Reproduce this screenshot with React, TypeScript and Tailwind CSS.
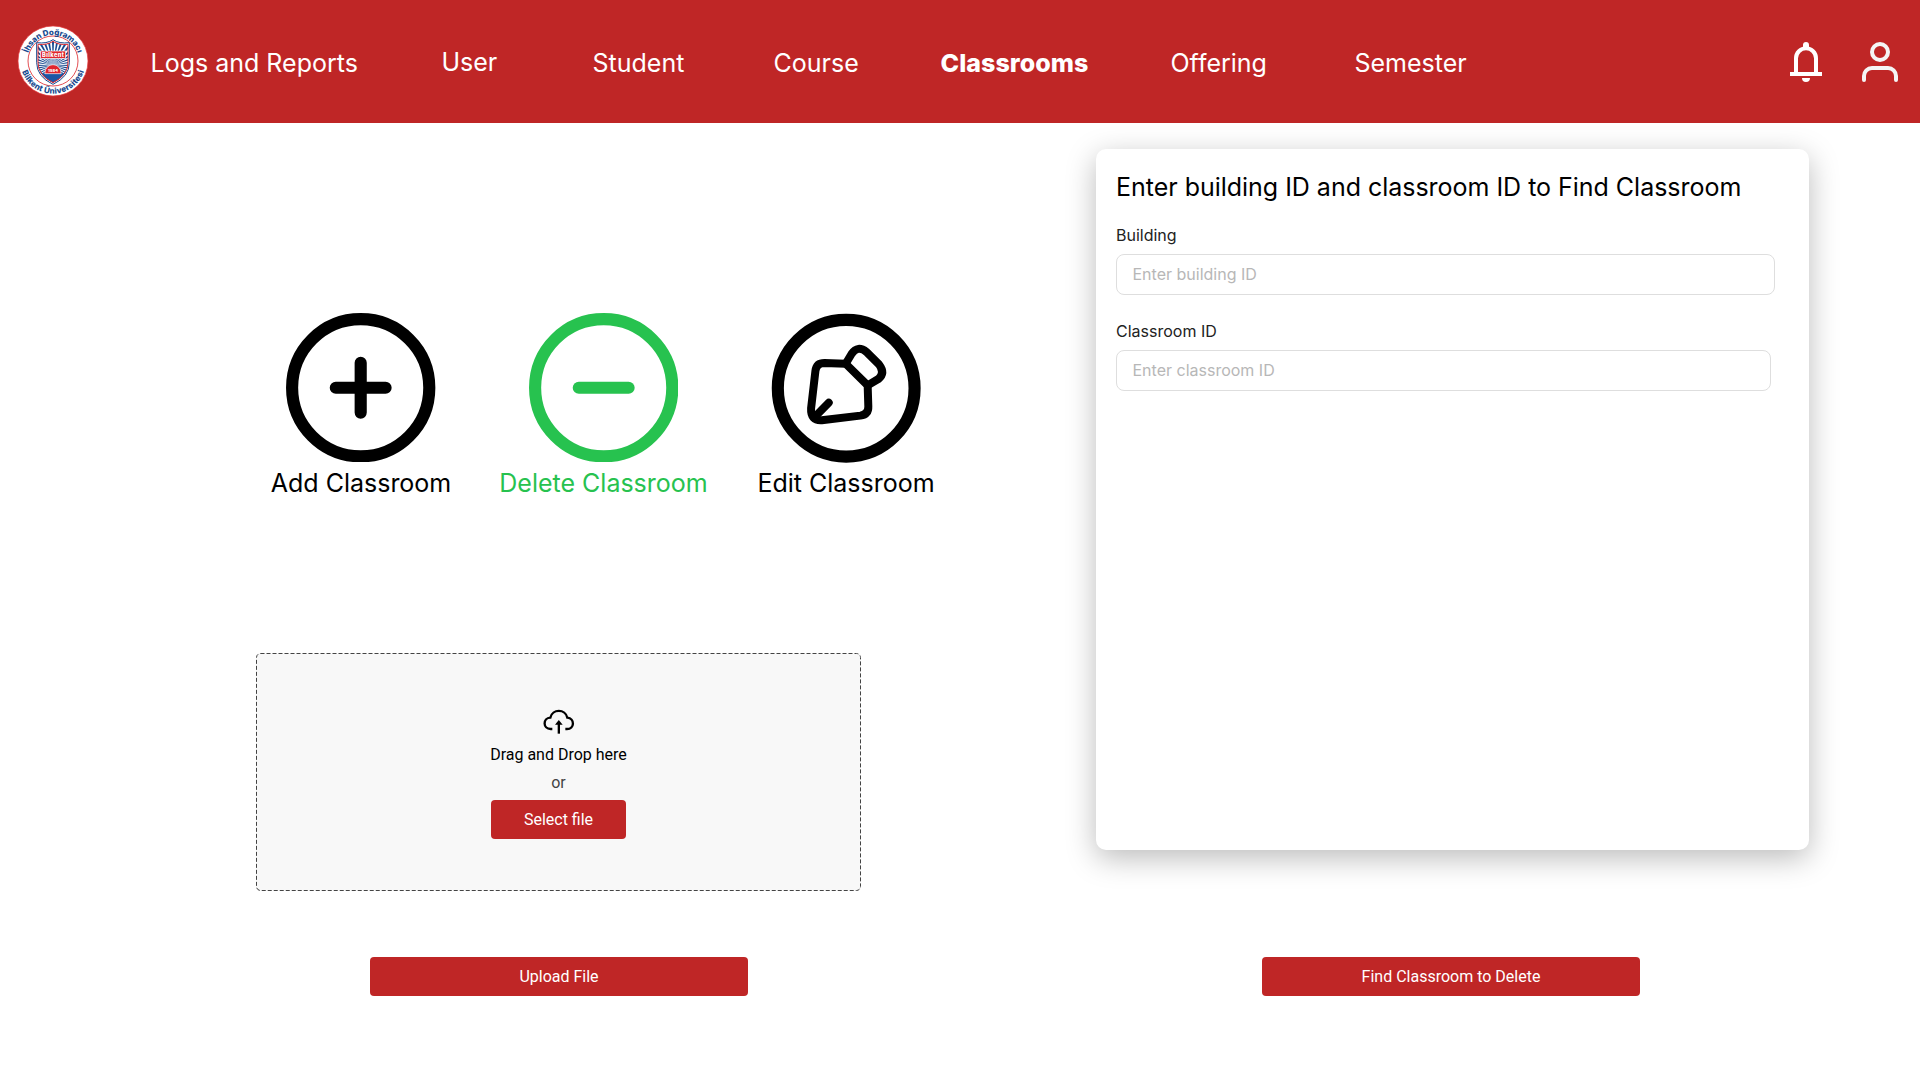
import type { ReactNode } from "react";

const navItems = [
  { label: "Logs and Reports", cls: "w-[291px]" },
  { label: "User", cls: "w-[151px] -mt-0.5" },
  { label: "Student", cls: "w-[181px]" },
  { label: "Course", cls: "w-[167px]" },
  { label: "Classrooms", cls: "w-[230px] font-extrabold tracking-[0.05px]" },
  { label: "Offering", cls: "w-[184px]" },
  { label: "Semester", cls: "" },
];

const CX = 158;
const CY = 168;

function wedge(i: number) {
  const a = (i * Math.PI) / 18;
  const w = Math.PI / 72;
  const p = (t: number) => `${CX + 110 * Math.cos(t)} ${CY + 110 * Math.sin(t)}`;
  return `M${CX} ${CY} L${p(a - w)} L${p(a + w)} Z`;
}

function Logo() {
  return (
    <svg viewBox="50 47 216 216" className="-mt-px h-[72px] w-[72px] shrink-0">
      <defs>
        <path id="arc-top" d="M80 155 A78 78 0 0 1 236 155" />
        <path id="arc-bottom" d="M60 155 A98 98 0 0 0 256 155" />
        <clipPath id="shield">
          <path d="M113 106 Q140 108 158 96 Q176 108 203 106 V160 Q203 198 158 220 Q113 198 113 160 Z" />
        </clipPath>
      </defs>
      <circle cx="158" cy="155" r="105" fill="#fff" stroke="#e5383b" strokeWidth="2" />
      <circle cx="158" cy="155" r="75" fill="#fff" stroke="#dc2a30" strokeWidth="2.5" />
      <g fill="#17498f" fontFamily="Inter, sans-serif" fontWeight="800" fontSize="24">
        <text textAnchor="middle">
          <textPath href="#arc-top" startOffset="50%" textLength="196">İhsan Doğramacı</textPath>
        </text>
        <text textAnchor="middle">
          <textPath href="#arc-bottom" startOffset="50%" textLength="244">Bilkent Üniversitesi</textPath>
        </text>
      </g>
      <path d="M109 100 Q140 104 158 91 Q176 104 207 100 V160 Q207 202 158 225 Q109 202 109 160 Z" fill="#fff" stroke="#17498f" strokeWidth="3" />
      <g clipPath="url(#shield)">
        {Array.from({ length: 36 }, (_, i) => (
          <path key={i} d={wedge(i)} fill="#17498f" />
        ))}
        <rect x="108" y="192" width="100" height="34" fill="#1c57a5" />
        <path d="M134 193 V190 A24 24 0 0 1 182 190 V193 Z" fill="#e0262d" stroke="#fff" strokeWidth="2" />
      </g>
      <path d="M113 105 Q140 108 158 96 Q176 108 203 105 V160 Q203 198 158 220 Q113 198 113 160 Z" fill="none" stroke="#dc2a30" strokeWidth="3" />
      <rect x="120" y="125" width="76" height="22" fill="#e0262d" stroke="#fff" strokeWidth="2" />
      <text x="158" y="142" textAnchor="middle" fill="#fff" fontFamily="Inter, sans-serif" fontWeight="800" fontSize="17" textLength="66">Bilkent</text>
      <text x="158" y="189" textAnchor="middle" fill="#fff" fontFamily="Inter, sans-serif" fontWeight="800" fontSize="12">1984</text>
    </svg>
  );
}

function Bell() {
  return (
    <svg viewBox="90 66 96 120" className="h-10 w-8" fill="none" stroke="#fff" strokeWidth="12">
      <path d="M108 160 V115 a30 30 0 0 1 60 0 V160" />
      <path d="M90 162 H186" />
      <path d="M129 84 V75 a9 9 0 0 1 18 0 V84 Z M126 174 H150 A12 12 0 0 1 126 174 Z" fill="#fff" stroke="none" />
    </svg>
  );
}

function Person() {
  return (
    <svg viewBox="306 66 108 120" className="h-10 w-9" fill="none" stroke="#f5f5f5" strokeWidth="12" strokeLinecap="round">
      <circle cx="360" cy="96" r="24" />
      <path d="M312 180 V168 a24 24 0 0 1 24 -24 H384 a24 24 0 0 1 24 24 V180" />
    </svg>
  );
}

function RoundIcon({ children }: { children: ReactNode }) {
  return (
    <svg viewBox="0 0 24 24" className="h-[149.4px] w-[149.4px]" fill="none" stroke="currentColor" strokeWidth="1.95" strokeLinecap="round">
      <circle cx="12" cy="12" r="11.02" />
      {children}
    </svg>
  );
}

function EditIcon() {
  return (
    <svg viewBox="215 41 449 449" className="h-[149.4px] w-[149.4px] overflow-visible" fill="none" stroke="currentColor" strokeWidth="24" strokeLinecap="round" strokeLinejoin="round">
      <g transform="translate(1.5 1.5)">
        <circle cx="439.5" cy="265.5" r="205.5" strokeWidth="36.5" />
        <path d="M438 192 L374 190 Q350 190 347 214 L334 326 Q332 364 366 362 L482 348 Q507 344 506 320 L504 257 Z" />
        <path d="M438 192 L456 162 Q474 135 501 157 L538 194 Q558 220 536 238 L504 257" />
        <path d="M345 352 L387 309" />
      </g>
    </svg>
  );
}

function CloudUpload() {
  return (
    <svg viewBox="218 57 96 78" className="h-[26px] w-8" fill="none" stroke="#000" strokeWidth="7">
      <path d="M246 117 H241 C217 117 217 84 240 83 C246 56 285 56 291 83 C314 86 313 117 290 117 H285" />
      <path d="M265.5 131 V98" />
      <path d="M254 104 L265.5 90 L277 104 Z" fill="#000" stroke="none" />
    </svg>
  );
}

function Action({ label, children, className }: { label: string; children: ReactNode; className: string }) {
  return (
    <button className={`flex flex-col items-center whitespace-nowrap text-[25px] leading-[30px] ${className}`}>
      {children}
      <span className="mt-[5.6px]">{label}</span>
    </button>
  );
}

function Field({ label, placeholder, width }: { label: string; placeholder: string; width: string }) {
  return (
    <label className="flex flex-col gap-[7px] text-base leading-6 text-[#222]">
      {label}
      <input placeholder={placeholder} className={`-ml-[0.5px] h-[41px] rounded-lg border border-[#dedede] bg-white px-4 pb-0.5 placeholder:text-[#b7b7b7] ${width}`} />
    </label>
  );
}

function RedButton({ label, className }: { label: string; className: string }) {
  return (
    <button className={`h-[39px] rounded bg-[#bf2626] text-center font-[Roboto,sans-serif] text-base leading-[39px] text-white ${className}`}>{label}</button>
  );
}

export default function App() {
  return (
    <div className="h-[1080px] w-[1920px] overflow-hidden bg-white font-[Inter,sans-serif] text-black">
      <header className="flex h-[123px] items-center bg-[#bf2626] pr-[22px] pl-[17px] text-white">
        <Logo />
        <nav className="ml-[61.5px] flex flex-1 items-center pt-0.5 text-[25px] leading-[30px]">
          {navItems.map((n) => (
            <a key={n.label} className={`whitespace-nowrap ${n.cls}`}>
              {n.label}
            </a>
          ))}
        </nav>
        <div className="flex gap-10">
          <Bell />
          <Person />
        </div>
      </header>
      <main className="flex">
        <section className="w-[1096px] pt-[190px]">
          <div className="flex h-[185px] pl-[241px]">
            <Action label="Add Classroom" className="w-[240px]">
              <RoundIcon>
                <path d="M12 8 V16 M8 12 H16" />
              </RoundIcon>
            </Action>
            <Action label="Delete Classroom" className="w-[245px] text-[#27c24f]">
              <RoundIcon>
                <path d="M8 12 H16" />
              </RoundIcon>
            </Action>
            <Action label="Edit Classroom" className="w-[240px]">
              <EditIcon />
            </Action>
          </div>
          <div className="relative mt-[155px] ml-[256px] flex h-[238px] w-[605px] flex-col items-center rounded bg-[#f8f8f8] pt-[56px] font-[Roboto,sans-serif]">
            <svg className="pointer-events-none absolute inset-0 h-[238px] w-[605px]" fill="none">
              <rect x="0.5" y="0.5" width="604" height="237" rx="4" stroke="#444" strokeDasharray="4 2" />
            </svg>
            <CloudUpload />
            <p className="mt-2 text-base leading-6">Drag and Drop here</p>
            <p className="mt-1 text-base leading-6 text-[#444]">or</p>
            <RedButton label="Select file" className="mt-[5px] w-[135px]" />
          </div>
          <RedButton label="Upload File" className="mt-[66px] ml-[370px] w-[378px]" />
        </section>
        <section className="pt-[26px]">
          <div className="h-[701px] w-[713px] rounded-[10px] bg-white pt-[22px] pl-5 shadow-[0_8px_30px_rgba(0,0,0,0.27)]">
            <h1 className="text-[25px] leading-[32px] tracking-[-0.02px]">Enter building ID and classroom ID to Find Classroom</h1>
            <div className="mt-5 flex flex-col gap-6">
              <Field label="Building" placeholder="Enter building ID" width="w-[659px]" />
              <Field label="Classroom ID" placeholder="Enter classroom ID" width="w-[655px]" />
            </div>
          </div>
          <RedButton label="Find Classroom to Delete" className="mt-[107px] ml-[166px] w-[378px]" />
        </section>
      </main>
    </div>
  );
}
